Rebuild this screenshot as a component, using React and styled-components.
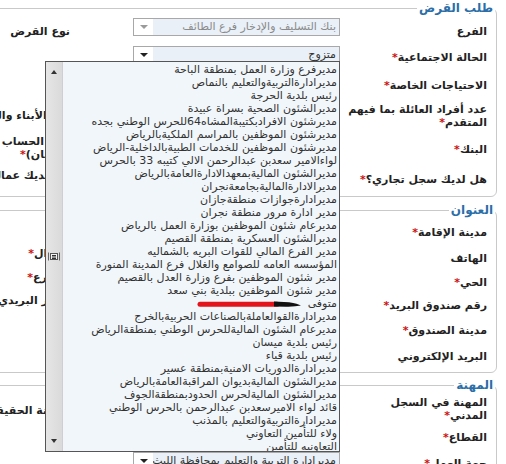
import React from "react";
import styled, { createGlobalStyle } from "styled-components";

const GlobalStyle = createGlobalStyle`
  html {
    direction: rtl;
    overflow: hidden;
  }
  body {
    margin: 0;
    background: #ffffff;
    font-family: "DejaVu Sans", "Noto Sans", sans-serif;
    overflow: hidden;
  }
`;

// the form is wider than the window; in rtl it overflows to the left and is cut
const Page = styled.div`
  width: 797px;
  padding-right: 9px;
`;

const Fieldset = styled.fieldset`
  margin: 0 0 ${(p) => p.$gap || 0}px;
  padding: 1px 9px 4px 10px;
  border: 1px solid #c9c9c9;
  border-radius: 6px;
  min-width: 0;
`;

const Legend = styled.legend`
  margin-right: -8px;
  padding: 0 2px;
  color: #2b6ea8;
  font-weight: bold;
  font-size: 12px;
  line-height: 16px;
`;

const Columns = styled.div`
  display: flex;
  align-items: flex-start;
  gap: 63px;
`;

const Column = styled.div`
  display: flex;
  flex-direction: column;
`;

const Row = styled.div`
  display: flex;
  align-items: center;
  height: ${(p) => p.$h}px;
`;

const Label = styled.div`
  width: 147px;
  flex: none;
  font-size: 11px;
  font-weight: bold;
  line-height: 13px;
  color: #222;
  white-space: nowrap;
`;

const Req = styled.span`
  color: #cc1111;
`;

const Field = styled.div`
  position: relative;
  width: 207px;
  flex: none;
  align-self: flex-start;
  margin-top: 1px;
`;

const Select = styled.div`
  display: flex;
  height: 18px;
  box-sizing: border-box;
  border: 1px solid #a8a8a8;
  background: #ffffff;
  font-size: 11px;
  line-height: 16px;
`;

const Value = styled.div`
  flex: 1;
  padding-right: 3px;
  background: #e9f0f7;
  color: ${(p) => (p.$disabled ? "#8a8a8a" : "#333")};
  white-space: nowrap;
  overflow: hidden;
`;

const ArrowBox = styled.div`
  width: 19px;
  flex: none;
  display: flex;
  align-items: center;
  justify-content: center;
`;

const Caret = styled.span`
  width: 0;
  height: 0;
  border-left: 4px solid transparent;
  border-right: 4px solid transparent;
  border-top: 4px solid ${(p) => (p.$disabled ? "#9a9a9a" : "#222")};
`;

const Dropdown = styled.div`
  position: absolute;
  right: 0;
  bottom: 100%;
  z-index: 10;
  width: 295px;
  height: 391px;
  box-sizing: border-box;
  display: flex;
  border: 1px solid #555;
  background: #f1f6fa;
`;

const Options = styled.div`
  flex: 1;
  padding: 1px 2px 0 0;
  overflow: hidden;
`;

const Option = styled.div`
  height: 13px;
  font-size: 11px;
  line-height: 13px;
  color: #333;
  white-space: nowrap;
`;

const Mark = styled.svg`
  vertical-align: middle;
  margin-right: 1px;
`;

const Scrollbar = styled.div`
  width: 17px;
  flex: none;
  display: flex;
  flex-direction: column;
  align-items: center;
  justify-content: space-between;
  padding: 8px 0;
  box-sizing: border-box;
  background: linear-gradient(to right, #e6e6e6, #dadada);
  border-right: 1px solid #cfcfcf;
`;

const ScrollArrow = styled.span`
  width: 0;
  height: 0;
  border-left: 3px solid transparent;
  border-right: 3px solid transparent;
  ${(p) =>
    p.$down ? "border-top: 4px solid #333;" : "border-bottom: 4px solid #333;"}
`;

const employers = [
  "مديرفرع وزارة العمل بمنطقة الباحة",
  "مديرادارةالتربيةوالتعليم بالنماص",
  "رئيس بلدية الحرجة",
  "مديرالشئون الصحية بسراة عبيدة",
  "مديرشئون الافرادبكتيبةالمشاه64للحرس الوطني بجده",
  "مديرشئون الموظفين بالمراسم الملكيةبالرياض",
  "مديرشئون الموظفين للخدمات الطبيةبالداخلية-الرياض",
  "لواءالامير سعدبن عبدالرحمن الالي كتيبه 33 بالحرس",
  "مديرالشئون الماليةبمعهدالادارةالعامةبالرياض",
  "مديرالادارةالماليةبجامعةنجران",
  "مديرادارةجوازات منطقةجازان",
  "مدير ادارة مرور منطقة نجران",
  "مديرعام شئون الموظفين بوزارة العمل بالرياض",
  "مديرالشئون العسكرية بمنطقة القصيم",
  "مدير الفرع المالي للقوات البريه بالشماليه",
  "المؤسسه العامه للصوامع والغلال فرع المدينة المنورة",
  "مدير شئون الموظفين بفرع وزارة العدل بالقصيم",
  "مدير شئون الموظفين ببلدية بني سعد",
  "متوفى",
  "مديرادارةالقوالعاملةبالصناعات الحربيةبالخرج",
  "مديرعام الشئون الماليةللحرس الوطني بمنطقةالرياض",
  "رئيس بلدية ميسان",
  "رئيس بلدية قياء",
  "مديرادارةالدوريات الامنيةبمنطقة عسير",
  "مديرالشئون الماليةبديوان المراقبةالعامةبالرياض",
  "مديرالشئون الماليةلحرس الحدودبمنطقةالجوف",
  "قائد لواء الاميرسعدبن عبدالرحمن بالحرس الوطني",
  "مديرادارةالتربيةوالتعليم بالمذنب",
  "ولاء للتأمين التعاوني",
  "التعاونيه للتأمين",
];

// marker stroke drawn over one entry in the screenshot
const Redaction = () => (
  <Mark width="110" height="8" viewBox="0 0 110 8">
    <path d="M3 4.2 L80 4.2" stroke="#e3141c" strokeWidth="5" strokeLinecap="round" />
    <path d="M77 1.6 L92 2.2 Q101 3.6 104 5.6 Q98 6.9 89 6.7 L77 6.6 Z" fill="#111" />
  </Mark>
);

const Grip = () => (
  <svg width="14" height="9" viewBox="0 0 14 9">
    <path d="M1.5 0.5 V8.5 M12.5 0.5 V8.5" stroke="#666" />
    <rect x="3.5" y="1.5" width="7" height="6" fill="#f4f4f4" stroke="#555" />
    <path d="M5 3.5 H9 M5 5 H9 M5 6.5 H9" stroke="#333" />
  </svg>
);

const SelectInput = ({ value, disabled, children }) => (
  <Field>
    <Select>
      <Value $disabled={disabled}>{value}</Value>
      <ArrowBox>
        <Caret $disabled={disabled} />
      </ArrowBox>
    </Select>
    {children}
  </Field>
);

const FormRow = ({ h, label, req, value, disabled, children }) => (
  <Row $h={h}>
    <Label>
      {label}
      {req && <Req>*</Req>}
    </Label>
    <SelectInput value={value} disabled={disabled}>
      {children}
    </SelectInput>
  </Row>
);

const EmployerList = () => (
  <Dropdown>
    <Options>
      {employers.map((name, i) => (
        <Option key={i}>
          {name}
          {name === "متوفى" && <Redaction />}
        </Option>
      ))}
    </Options>
    <Scrollbar>
      <ScrollArrow />
      <Grip />
      <ScrollArrow $down />
    </Scrollbar>
  </Dropdown>
);

export default function App() {
  return (
    <Page>
      <GlobalStyle />
      <Fieldset $gap={5}>
        <Legend>طلب القرض</Legend>
        <Columns>
          <Column>
            <FormRow h={28} label="الفرع" value="بنك التسليف والإدخار فرع الطائف" disabled />
            <FormRow h={25} label="الحالة الاجتماعية" req value="متزوج" />
            <FormRow h={30} label="الاحتياجات الخاصة" req value="لا يوجد" />
            <FormRow
              h={32}
              label={<>عدد أفراد العائلة بما فيهم<br />المتقدم</>}
              req
              value="5"
            />
            <FormRow h={34} label="البنك" req value="" />
            <FormRow h={26} label="هل لديك سجل تجاري؟" req value="لا" />
          </Column>
          <Column>
            <FormRow h={28} label="نوع القرض" value="" />
            <FormRow h={27} label="" value="" />
            <FormRow h={28} label="" value="" />
            <FormRow h={30} label="عدد الأبناء والبنات" value="" />
            <FormRow h={35} label={<>رقم الحساب البنكي<br />(الآيبان)</>} req value="" />
            <FormRow h={20} label="هل لديك عمالة منزلية؟" req value="" />
          </Column>
        </Columns>
      </Fieldset>

      <Fieldset $gap={4}>
        <Legend>العنوان</Legend>
        <Columns>
          <Column>
            <FormRow h={26} label="مدينة الإقامة" req value="" />
            <FormRow h={26} label="الهاتف" value="" />
            <FormRow h={23} label="الحي" req value="" />
            <FormRow h={23} label="رقم صندوق البريد" req value="" />
            <FormRow h={27} label="مدينة الصندوق" req value="" />
            <FormRow h={24} label="البريد الإلكتروني" value="" />
          </Column>
          <Column>
            <FormRow h={22} label="" value="" />
            <FormRow h={24} label="الجوال" req value="" />
            <FormRow h={24} label="الشارع" req value="" />
            <FormRow h={22} label="الرمز البريدي" value="" />
            <FormRow h={26} label="" value="" />
            <FormRow h={26} label="" value="" />
          </Column>
        </Columns>
      </Fieldset>

      <Fieldset>
        <Legend>المهنة</Legend>
        <Columns>
          <Column>
            <FormRow h={30} label={<>المهنة في السجل<br />المدني</>} req value="" />
            <FormRow h={27} label="القطاع" req value="" />
            <FormRow h={24} label="جهة العمل" req value="مديرادارة التربية والتعليم بمحافظة الليث">
              <EmployerList />
            </FormRow>
          </Column>
          <Column>
            <FormRow h={32} label="المهنة الحقيقية" value="" />
            <FormRow h={27} label="" value="" />
            <FormRow h={24} label="" value="" />
          </Column>
        </Columns>
      </Fieldset>
    </Page>
  );
}
